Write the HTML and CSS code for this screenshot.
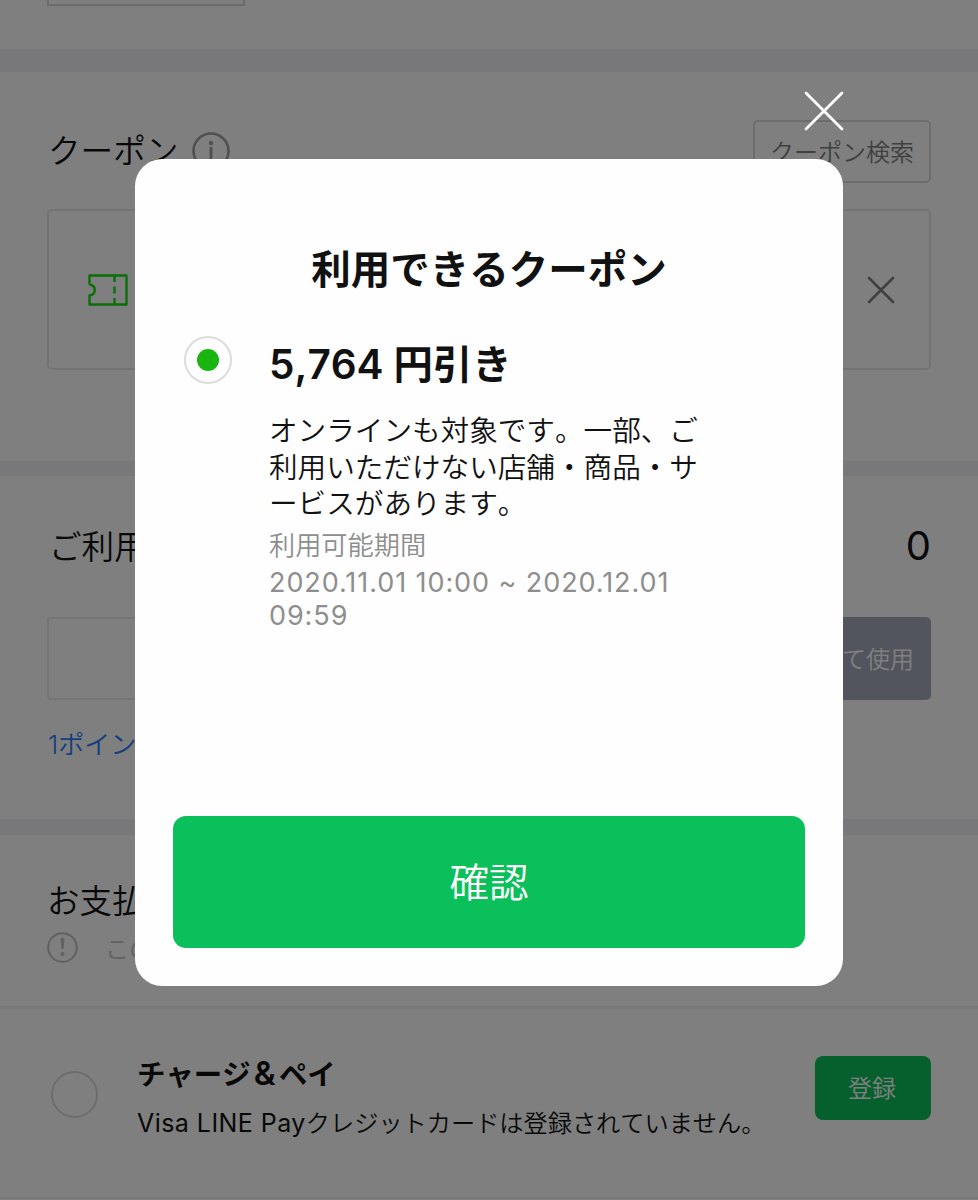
FILE: index.html
```html
<!DOCTYPE html>
<html lang="ja">
<head>
    <meta charset="UTF-8">
    <meta name="viewport" content="width=device-width, initial-scale=1.0">
    <title>クーポン</title>
    <link rel="stylesheet" href="styles.css">
</head>
<body>
    <main class="page">
        <section class="top">
            <div class="top-box"></div>
        </section>

        <section class="coupon">
            <div class="coupon-head">
                <h2>クーポン</h2>
                <svg class="info-icon" width="38" height="38" viewBox="0 0 38 38" fill="none" stroke="#a0a0a0" stroke-width="2.6">
                    <circle cx="19" cy="19" r="17.5"/>
                    <path d="M19 15v14" stroke-width="3"/>
                    <circle cx="19" cy="11" r="2.2" fill="#a0a0a0" stroke="none"/>
                </svg>
                <button class="search-btn">クーポン検索</button>
            </div>
            <div class="coupon-box">
                <svg class="ticket-icon" width="40" height="32" viewBox="0 0 40 32" fill="none" stroke="#12e00f" stroke-width="2.4" stroke-linejoin="round">
                    <path d="M1.500 1.500H38.500V30.500H1.500V21.500A5.500 5.500 0 0 0 1.500 10.500Z" stroke="none"/>
                    <path d="M1.500 10.500V1.500H38.500V30.500H1.500V21.500C8.500 20.500 8.500 11.500 1.500 10.500"/>
                    <path d="M26.500 2v6M26.500 12.500v7M26.500 24v6"/>
                </svg>
                <svg class="remove-icon" width="28" height="28" viewBox="0 0 28 28" stroke="#808080" stroke-width="2.6" stroke-linecap="round">
                    <path d="M2 2L26 26M26 2L2 26"/>
                </svg>
            </div>
        </section>

        <section class="points">
            <div class="points-head">
                <h2>ご利用</h2>
                <span class="points-value">0</span>
            </div>
            <div class="points-form">
                <div class="points-input"></div>
                <button class="use-all">て使用</button>
            </div>
            <p class="rate">1ポイン</p>
        </section>

        <section class="payment">
            <h2>お支払</h2>
            <div class="notice">
                <svg width="31" height="31" viewBox="0 0 31 31" fill="none" stroke="#c2c2c2" stroke-width="2">
                    <circle cx="15.500" cy="15.500" r="14.300"/>
                    <path d="M13.500 7.500a2 2 0 0 1 4 0l-1 9.500h-2z" fill="#c2c2c2" stroke="none"/>
                    <circle cx="15.500" cy="22" r="2" fill="#c2c2c2" stroke="none"/>
                </svg>
                <span>この</span>
            </div>
        </section>

        <section class="method">
            <span class="method-radio"></span>
            <div class="method-text">
                <h3>チャージ<span class="amp">&amp;</span>ペイ</h3>
                <p><span class="brand">Visa LINE Pay</span>クレジットカードは登録されていません。</p>
            </div>
            <button class="register-btn">登録</button>
        </section>
    </main>

    <div class="overlay">
        <div class="modal">
            <svg class="close" width="42" height="42" viewBox="0 0 42 42" stroke="#fff" stroke-width="2.8" stroke-linecap="round">
                <path d="M3 3L39 39M39 3L3 39"/>
            </svg>
            <h1>利用できるクーポン</h1>
            <div class="option">
                <span class="radio"></span>
                <div class="option-text">
                    <h2><span class="amount">5,764</span> 円引き</h2>
                    <p class="desc">オンラインも対象です。一部、ご<br>利用いただけない店舗・商品・サ<br>ービスがあります。</p>
                    <p class="period">利用可能期間</p>
                    <p class="dates">2020.11.01 10:00 ~ 2020.12.01<br>09:59</p>
                </div>
            </div>
            <button class="confirm">確認</button>
        </div>
    </div>
</body>
</html>
```
FILE: styles.css
```css
* {
    box-sizing: border-box;
}
body {
    margin: 0;
    font-family: Inter, "Noto Sans CJK JP", sans-serif;
    font-kerning: none;
    color: #111;
    background-color: white;
}
h1, h2, h3, p {
    margin: 0;
}
button {
    font-family: inherit;
    padding: 0 0 3px;
    border: none;
    white-space: nowrap;
}
svg {
    display: block;
    flex: none;
}
.page {
    width: 978px;
    height: 1200px;
    overflow: hidden;
}
.page h2 {
    font-size: 32.6px;
    font-weight: 350;
    line-height: 48px;
}

/* sections */
.top {
    height: 72px;
    padding-left: 47px;
    border-bottom: 23px solid #f0f0f6;
}
.top-box {
    width: 198px;
    height: 6px;
    border: 2px solid #d8d8d8;
    border-top: none;
}
.coupon {
    height: 404px;
    padding: 48px 47px 0;
    border-bottom: 15px solid #f0f0f6;
}
.coupon-head {
    display: flex;
    height: 63px;
    align-items: center;
}
.coupon-head h2 {
    margin-left: 1px;
    padding-bottom: 2px;
}
.info-icon {
    margin: 0 0 1px 14px;
}
.search-btn {
    width: 178px;
    height: 63px;
    margin-left: auto;
    border: 2px solid #dadada;
    border-radius: 5px;
    background: none;
    font-size: 24px;
    font-weight: 350;
    color: #808080;
}
.coupon-box {
    display: flex;
    align-items: center;
    justify-content: space-between;
    height: 161px;
    margin-top: 26px;
    padding: 0 34px 0 39px;
    border: 2px solid #e6e6e6;
    border-radius: 5px;
}
.points {
    height: 359px;
    padding: 47px 47px 0;
    border-bottom: 16px solid #f0f0f6;
}
.points-head {
    display: flex;
    justify-content: space-between;
    align-items: center;
    height: 48px;
    padding-left: 2px;
}
.points-value {
    padding-bottom: 3px;
    font-size: 40px;
    font-weight: 400;
}
.points-form {
    display: flex;
    height: 83px;
    margin-top: 46px;
}
.points-input {
    flex: 1;
    border: 2px solid #ebebeb;
    border-radius: 4px;
}
.use-all {
    width: 200px;
    padding-right: 17px;
    border-radius: 5px;
    background-color: #a4aaba;
    color: white;
    font-size: 24px;
    font-weight: 350;
    text-align: right;
}
.rate {
    margin: 26px 0 0 1px;
    font-size: 26px;
    font-weight: 350;
    line-height: 38px;
    color: #2c7cff;
}
.payment {
    height: 174px;
    padding: 42px 47px 0;
    border-bottom: 3px solid #f2f2f5;
}
.notice {
    display: flex;
    align-items: center;
    height: 34px;
    margin-top: 5px;
    font-size: 24px;
    font-weight: 350;
    color: #c2c2c2;
}
.notice span {
    margin-left: 27px;
}
.method {
    display: flex;
    align-items: flex-start;
    height: 190px;
    padding: 47px 47px 0 51px;
    border-bottom: 2px solid #f2f2f5;
}
.method-radio {
    width: 47px;
    height: 47px;
    margin-top: 15px;
    border: 2px solid #d8dddb;
    border-radius: 50%;
}
.method-text {
    margin-left: 39px;
    white-space: nowrap;
}
.method-text h3 {
    font-size: 28.4px;
    line-height: 38px;
}
.amp {
    display: inline-block;
    width: 28.4px;
    font-size: 33px;
    font-weight: 600;
    line-height: 1;
    text-align: center;
}
.method-text p {
    margin-top: 11px;
    font-size: 24.2px;
    line-height: 36px;
    font-weight: 350;
}
.brand {
    font-size: 25px;
    font-weight: 400;
    font-kerning: normal;
    letter-spacing: 0.45px;
}
.register-btn {
    width: 116px;
    height: 64px;
    margin-left: auto;
    padding-right: 2px;
    border-radius: 8px;
    background-color: #0bc05b;
    color: white;
    font-size: 24px;
    font-weight: 350;
}

/* modal */
.overlay {
    position: fixed;
    inset: 0;
    background-color: rgba(0, 0, 0, 0.5);
}
.modal {
    position: relative;
    display: flex;
    flex-direction: column;
    width: 708px;
    height: 827px;
    margin: 159px 0 0 135px;
    padding: 82px 38px 38px;
    border-radius: 27px;
    background-color: #fefefe;
}
.close {
    position: absolute;
    top: -69px;
    right: -2px;
}
.modal h1 {
    font-size: 39.5px;
    line-height: 58px;
    text-align: center;
}
.option {
    display: flex;
    margin-top: 36px;
    padding-left: 11px;
}
.radio {
    display: flex;
    align-items: center;
    justify-content: center;
    width: 48px;
    height: 48px;
    margin-top: 1px;
    border: 2px solid #dcdcdc;
    border-radius: 50%;
}
.radio::before {
    content: "";
    width: 22px;
    height: 22px;
    border-radius: 50%;
    background-color: #19b510;
}
.option-text {
    margin-left: 37px;
    white-space: nowrap;
}
.option-text h2 {
    margin-top: 1px;
    font-size: 39.4px;
    font-weight: 600;
    line-height: 58px;
}
.amount {
    font-size: 40.5px;
}
.desc {
    margin-top: 19px;
    font-size: 28.6px;
    font-weight: 350;
    line-height: 36.5px;
}
.period {
    margin-top: 4px;
    padding-bottom: 1px;
    font-size: 26.2px;
    font-weight: 350;
    line-height: 38px;
    color: #8e8e8e;
}
.dates {
    font-size: 27px;
    font-kerning: normal;
    line-height: 33px;
    letter-spacing: 0.92px;
    color: #8e8e8e;
}
.confirm {
    height: 132px;
    margin-top: auto;
    padding-bottom: 5px;
    border-radius: 13px;
    background-color: #0bc05b;
    color: white;
    font-size: 39.6px;
    font-weight: 350;
}
```
